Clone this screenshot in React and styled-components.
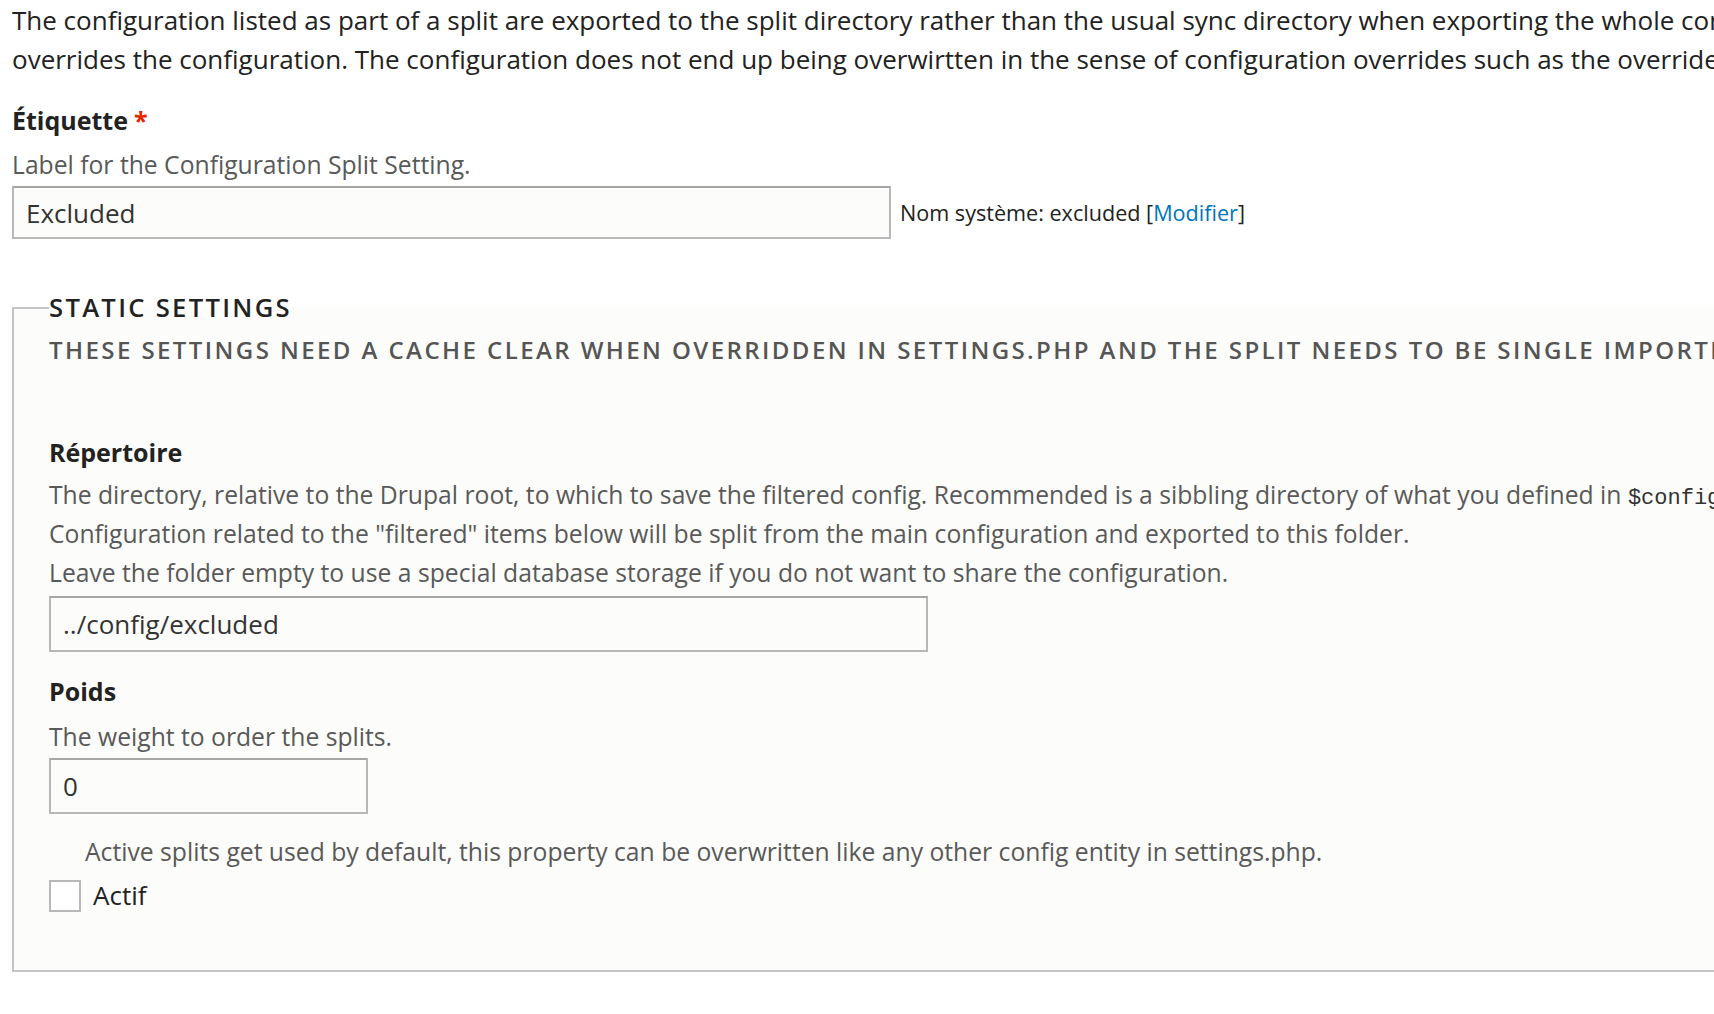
import styled, { createGlobalStyle } from "styled-components";

const GlobalStyles = createGlobalStyle`
  html, body {
    margin: 0;
    padding: 0;
    background: #ffffff;
    overflow: hidden;
  }
  body {
    font-family: "Open Sans", "DejaVu Sans", sans-serif;
    color: #222222;
  }
`;

const Page = styled.div`
  width: 2400px;
  padding: 1px 0 40px 12px;
  font-size: 24.7px;
  line-height: 39px;
`;

const Intro = styled.p`
  margin: 0;
  white-space: nowrap;
  font-size: 26px;
  color: #222222;
`;

const FormItem = styled.div`
  margin-top: ${(p) => p.$top || 0}px;
`;

const Label = styled.label`
  display: block;
  font-weight: 700;
  font-size: 25px;
  line-height: 34px;
  color: #222222;
`;

const Required = styled.span`
  color: #e32700;
  margin-left: 6px;
`;

const Description = styled.div`
  color: #595959;
  white-space: nowrap;
  margin: ${(p) => p.$margin || "8px 0 2px"};
  padding-left: ${(p) => p.$indent || 0}px;
`;

const InlineRow = styled.div`
  display: flex;
  align-items: center;
  gap: 9px;
`;

const TextInput = styled.input`
  box-sizing: border-box;
  display: block;
  width: ${(p) => p.$width}px;
  height: ${(p) => p.$height || 53}px;
  padding: 0 12px;
  border: 2px solid #b8b8b8;
  border-top-color: #a6a6a6;
  background: #fcfcfa;
  font-family: "Open Sans", sans-serif;
  font-size: 26px;
  color: #333333;
  outline: none;
`;

const MachineName = styled.span`
  font-size: 21.6px;
  color: #222222;

  a {
    color: #0074bd;
    text-decoration: none;
  }
`;

const Fieldset = styled.fieldset`
  margin: 52px 0 0;
  padding: 0 0 55px 35px;
  border: 2px solid #c4c4c4;
  background: #fcfcfa;
  min-inline-size: 0;
`;

const Legend = styled.legend`
  width: 100%;
  padding: 0;
  font-size: 25.6px;
  font-weight: 600;
  letter-spacing: 0.09em;
  text-transform: uppercase;
  color: #222222;
  line-height: 34px;
`;

const FieldsetNote = styled.div`
  font-size: 24.05px;
  font-weight: 600;
  letter-spacing: 0.1em;
  text-transform: uppercase;
  color: #555555;
  white-space: nowrap;
  margin-top: 5px;
`;

const Code = styled.code`
  font-family: "Liberation Mono", monospace;
  font-size: 22px;
  line-height: 0;
  color: #333333;
`;

const CheckRow = styled.label`
  display: flex;
  align-items: center;
  gap: 12px;
  margin-top: 5px;
  color: #222222;
  font-size: 26px;
`;

const CheckBox = styled.span`
  box-sizing: border-box;
  width: 32px;
  height: 32px;
  border: 2px solid #b8b8b8;
  background: #ffffff;
`;

export default function App() {
  return (
    <Page>
      <GlobalStyles />
      <Intro>
        The configuration listed as part of a split are exported to the split
        directory rather than the usual sync directory when exporting the whole
        configuration. The split is also respected when importing the
        configuration, this allows for different configuration than the
        <br />
        overrides the configuration. The configuration does not end up being
        overwirtten in the sense of configuration overrides such as the
        overrides in settings.php.
      </Intro>

      <FormItem $top={24}>
        <Label>
          Étiquette<Required>*</Required>
        </Label>
        <Description>Label for the Configuration Split Setting.</Description>
        <InlineRow>
          <TextInput $width={879} defaultValue="Excluded" />
          <MachineName>
            Nom système: excluded [<a href="#">Modifier</a>]
          </MachineName>
        </InlineRow>
      </FormItem>

      <Fieldset>
        <Legend>Static Settings</Legend>
        <FieldsetNote>
          These settings need a cache clear when overridden in settings.php and
          the split needs to be single imported before it takes effect.
        </FieldsetNote>

        <FormItem $top={66}>
          <Label>Répertoire</Label>
          <Description $margin="6px 0 0">
            The directory, relative to the Drupal root, to which to save the
            filtered config. Recommended is a sibbling directory of what you
            defined in <Code>$config_directories[CONFIG_SYNC_DIRECTORY]</Code>{" "}
            in settings.php.
          </Description>
          <Description $margin="0">
            Configuration related to the "filtered" items below will be split
            from the main configuration and exported to this folder.
          </Description>
          <Description $margin="0 0 4px">
            Leave the folder empty to use a special database storage if you do
            not want to share the configuration.
          </Description>
          <TextInput $width={879} $height={56} defaultValue="../config/excluded" />
        </FormItem>

        <FormItem $top={22}>
          <Label>Poids</Label>
          <Description $margin="9px 0 2px">
            The weight to order the splits.
          </Description>
          <TextInput $width={319} $height={56} defaultValue="0" />
        </FormItem>

        <FormItem $top={18}>
          <Description $indent={36} $margin="0">
            Active splits get used by default, this property can be overwritten
            like any other config entity in settings.php.
          </Description>
          <CheckRow>
            <CheckBox />
            Actif
          </CheckRow>
        </FormItem>
      </Fieldset>
    </Page>
  );
}
